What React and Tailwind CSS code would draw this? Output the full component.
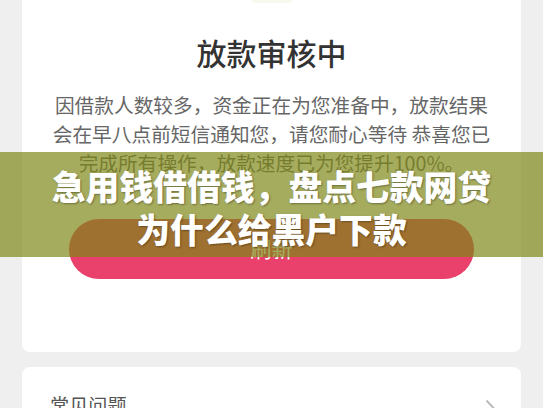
import React from "react";

const cjk = { fontFamily: '"Noto Sans CJK SC", "Noto Sans", sans-serif' };

export default function App() {
  return (
    <div
      className="relative h-[408px] w-[543px] overflow-hidden bg-[#efefef] px-[22px]"
      style={cjk}
    >
      <div className="flex flex-col items-center rounded-b-lg bg-white pb-[73px]">
        <div className="h-[3px] w-[40px] rounded-b-full bg-[#f9f8ec]" />
        <div className="mt-[29px] text-[30px] font-medium leading-[40px] text-[#333333]">
          放款审核中
        </div>
        <div className="mt-[18px] text-center text-[19.7px] leading-[29px] text-[#666666]">
          因借款人数较多，资金正在为您准备中，放款结果
          <br />
          会在早八点前短信通知您，请您耐心等待 恭喜您已
          <br />
          完成所有操作，放款速度已为您提升100%。
        </div>
        <button className="mt-[42px] flex h-[60px] w-[405px] items-center justify-center rounded-full bg-[#e9416b] text-[21px] text-white">
          刷新
        </button>
      </div>

      <div className="mt-[15px] flex h-[60px] items-start justify-between rounded-t-lg bg-white pl-[28px] pr-[26px] pt-[24px]">
        <span className="text-[19.2px] leading-[28px] text-[#555555]">常见问题</span>
        <svg width="10" height="18" viewBox="0 0 10 18" className="mt-[8px]">
          <path d="M1.5 1.5 L8.5 9 L1.5 16.5" fill="none" stroke="#bbbbbb" strokeWidth="2" />
        </svg>
      </div>

      <div className="absolute left-0 top-[152px] flex h-[105px] w-[543px] flex-col items-center justify-center bg-[rgba(126,135,22,0.69)] pt-[4px]">
        <div
          className="text-[33.8px] font-black leading-[43px] text-white"
          style={{ textShadow: "1px 1px 2px rgba(0,0,0,0.35)" }}
        >
          急用钱借借钱，盘点七款网贷
        </div>
        <div
          className="text-[33.8px] font-black leading-[43px] text-white"
          style={{ textShadow: "1px 1px 2px rgba(0,0,0,0.35)" }}
        >
          为什么给黑户下款
        </div>
      </div>
    </div>
  );
}
